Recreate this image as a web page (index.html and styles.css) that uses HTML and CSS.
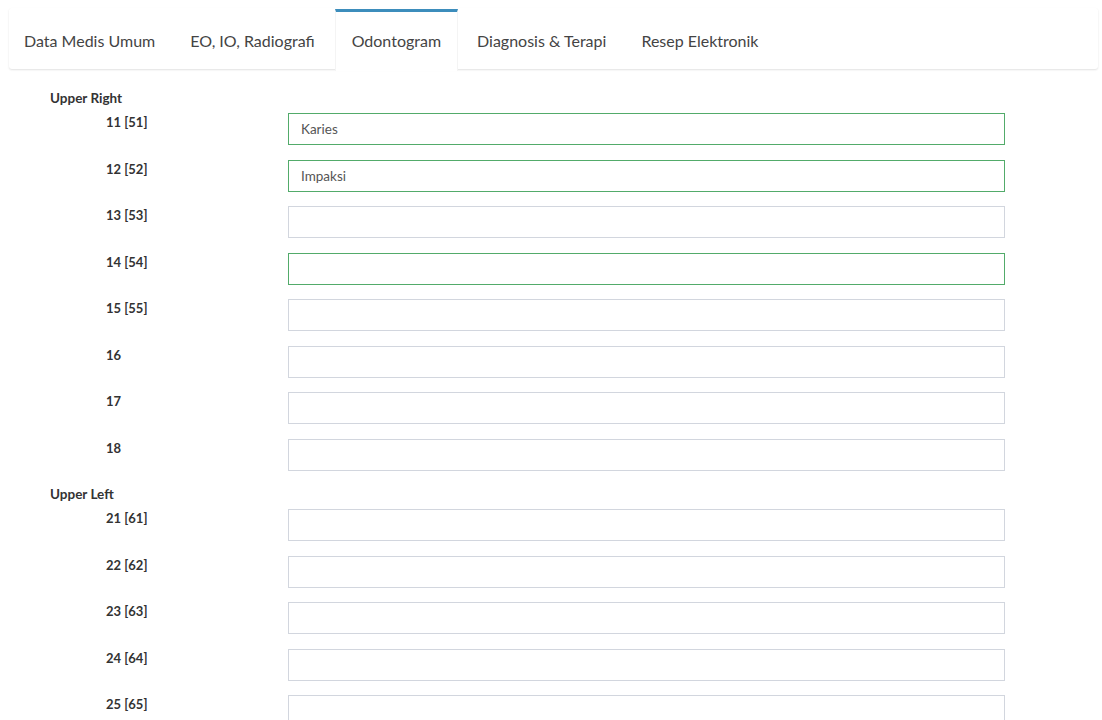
FILE: index.html
```html
<!DOCTYPE html>
<html>
<head>
<meta charset="utf-8">
<link rel="stylesheet" href="styles.css">
</head>
<body>
<div class="page">
  <div class="tabs-box">
    <ul class="tabs">
      <li class="tab">Data Medis Umum</li>
      <li class="tab">EO, IO, Radiografi</li>
      <li class="tab active">Odontogram</li>
      <li class="tab">Diagnosis &amp; Terapi</li>
      <li class="tab">Resep Elektronik</li>
    </ul>
  </div>
  <form class="form">
    <div class="group-title">Upper Right</div>
    <div class="row"><label class="lbl">11 [51]</label><input class="inp ok" type="text" value="Karies"></div>
    <div class="row"><label class="lbl">12 [52]</label><input class="inp ok" type="text" value="Impaksi"></div>
    <div class="row"><label class="lbl">13 [53]</label><input class="inp" type="text"></div>
    <div class="row"><label class="lbl">14 [54]</label><input class="inp ok" type="text"></div>
    <div class="row"><label class="lbl">15 [55]</label><input class="inp" type="text"></div>
    <div class="row"><label class="lbl">16</label><input class="inp" type="text"></div>
    <div class="row"><label class="lbl">17</label><input class="inp" type="text"></div>
    <div class="row"><label class="lbl">18</label><input class="inp" type="text"></div>
    <div class="group-title">Upper Left</div>
    <div class="row"><label class="lbl">21 [61]</label><input class="inp" type="text"></div>
    <div class="row"><label class="lbl">22 [62]</label><input class="inp" type="text"></div>
    <div class="row"><label class="lbl">23 [63]</label><input class="inp" type="text"></div>
    <div class="row"><label class="lbl">24 [64]</label><input class="inp" type="text"></div>
    <div class="row"><label class="lbl">25 [65]</label><input class="inp" type="text"></div>
  </form>
</div>
</body>
</html>
```

FILE: styles.css
```css
html, body {
  margin: 0;
  padding: 0;
  background: #fff;
  font-family: "Lato", "Liberation Sans", sans-serif;
  color: #333;
}
.page {
  padding: 8px 4px 0 9px;
}
.tabs-box {
  background: #fff;
  box-shadow: 0 1px 2px rgba(0, 0, 0, 0.12);
  border-radius: 3px;
}
.tabs {
  list-style: none;
  margin: 0;
  padding: 1px 0 0 0;
  display: flex;
  height: 60px;
}
.tab {
  border-top: 3px solid transparent;
  border-left: 1px solid transparent;
  border-right: 1px solid transparent;
  padding: 0 14px 2px 14px;
  margin-right: 5px;
  height: 56px;
  display: flex;
  align-items: center;
  font-size: 16px;
  color: #444;
  white-space: nowrap;
}
.tab.active {
  border-top-color: #3c8dbc;
  border-left-color: #f4f4f4;
  border-right-color: #f4f4f4;
  background: #fff;
  color: #444;
  position: relative;
  height: 57px;
  padding: 0 16px 2px 16px;
  margin-right: 4px;
  z-index: 1;
}
.form {
  padding: 20px 0 0 41px;
}
.group-title {
  font-weight: 700;
  font-size: 13.5px;
  height: 19px;
  line-height: 19px;
  margin-bottom: 5px;
  color: #333;
}
.row {
  display: grid;
  grid-template-columns: 238px 717px;
  margin-bottom: 14.5px;
}
.lbl {
  font-weight: 700;
  font-size: 13px;
  padding: 1px 0 0 56px;
  color: #333;
}
.inp {
  box-sizing: border-box;
  height: 32px;
  width: 717px;
  border: 1px solid #d2d6de;
  padding: 0 12px;
  font-family: "Lato", "Liberation Sans", sans-serif;
  font-size: 13.5px;
  color: #555;
  outline: none;
  border-radius: 0;
  margin: 0;
}
.inp.ok {
  border-color: #52ab6a;
}
```
